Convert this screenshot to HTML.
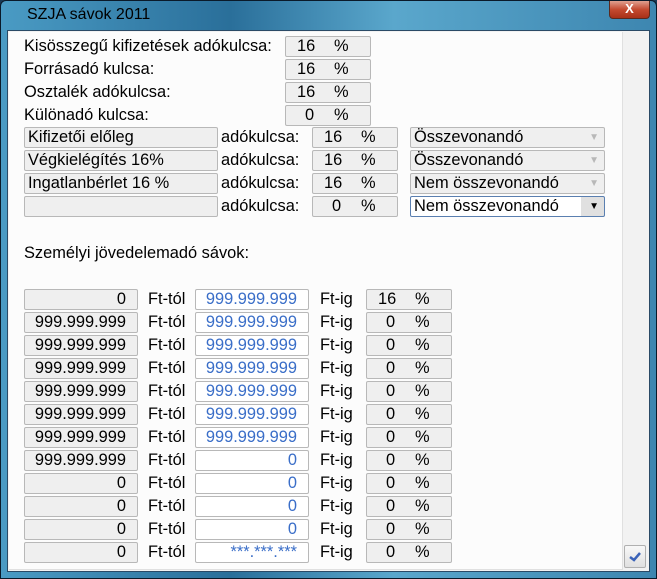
<!DOCTYPE html>
<html><head><meta charset="utf-8"><style>
*{box-sizing:border-box;margin:0;padding:0}
body{width:657px;height:579px;overflow:hidden;font-family:"Liberation Sans",Arial,sans-serif;font-size:16.4px;color:#000;background:#1a3a55}
.win{position:absolute;left:0;top:0;width:657px;height:579px;border:1px solid #0a1a2a;background:linear-gradient(90deg,#4a9bc4 0%,#2a6f9a 35%,#5aa7cc 60%,#3d86b0 100%);border-radius:6px 6px 0 0}
.title{position:absolute;left:26px;top:5px;font-size:16px;color:#000}
.close{position:absolute;left:608px;top:0;width:41px;height:18px;border:1px solid #5a2a20;border-top:none;border-radius:0 0 4px 4px;background:linear-gradient(#e0a090,#c44a30 50%,#a83018);color:#fff;font-weight:bold;text-align:center;font-size:13px;line-height:16px}
.client{position:absolute;left:7px;top:30px;width:643px;height:542px;background:#f2f2f2;border:1px solid #2a4a66}
.panel{position:absolute;left:1px;top:1px;width:614px;height:538px;background:#fcfcfc;border-right:1px solid #e0e0e0;border-bottom:1px solid #e0e0e0}
.a{position:absolute;white-space:nowrap}
.b{position:absolute;height:21px;border:1px solid #b8b8b8;border-radius:2px;background:#efefef;line-height:19px;white-space:nowrap}
.w{background:#fff;color:#3a6ec8}
.chk{position:absolute;left:624px;top:545px;width:22px;height:23px;border:1px solid #b0b0b0;border-radius:2px;background:linear-gradient(#f8f8f8,#e0e0e0)}
</style></head><body>
<div class="win">
<div class="title">SZJA sávok 2011</div>
<div class="close">X</div>
</div>
<div class="client"><div class="panel"></div></div>
<div class="chk"><svg width="20" height="21" viewBox="0 0 20 21"><path d="M5 11 L9 14 L15 7" stroke="#3a62b8" stroke-width="2.5" fill="none"/></svg></div>

<div class="a" style="left:24px;top:37px">Kisösszegű kifizetések adókulcsa:</div>
<div class="a" style="left:24px;top:60px">Forrásadó kulcsa:</div>
<div class="a" style="left:24px;top:83px">Osztalék adókulcsa:</div>
<div class="a" style="left:24px;top:106px">Különadó kulcsa:</div>
<div class="b" style="left:285px;top:36px;width:86px"><span class="a" style="left:11px">16</span><span class="a" style="left:48px">%</span></div>
<div class="b" style="left:285px;top:59px;width:86px"><span class="a" style="left:11px">16</span><span class="a" style="left:48px">%</span></div>
<div class="b" style="left:285px;top:82px;width:86px"><span class="a" style="left:11px">16</span><span class="a" style="left:48px">%</span></div>
<div class="b" style="left:285px;top:105px;width:86px"><span class="a" style="left:19px">0</span><span class="a" style="left:48px">%</span></div>

<div class="b" style="left:24px;top:127px;width:194px;padding-left:3px">Kifizetői előleg</div>
<div class="b" style="left:24px;top:150px;width:194px;padding-left:3px">Végkielégítés 16%</div>
<div class="b" style="left:24px;top:173px;width:194px;padding-left:3px">Ingatlanbérlet 16 %</div>
<div class="b" style="left:24px;top:196px;width:194px"></div>
<div class="a" style="left:221px;top:128px">adókulcsa:</div>
<div class="a" style="left:221px;top:151px">adókulcsa:</div>
<div class="a" style="left:221px;top:174px">adókulcsa:</div>
<div class="a" style="left:221px;top:197px">adókulcsa:</div>
<div class="b" style="left:312px;top:127px;width:86px"><span class="a" style="left:11px">16</span><span class="a" style="left:48px">%</span></div>
<div class="b" style="left:312px;top:150px;width:86px"><span class="a" style="left:11px">16</span><span class="a" style="left:48px">%</span></div>
<div class="b" style="left:312px;top:173px;width:86px"><span class="a" style="left:11px">16</span><span class="a" style="left:48px">%</span></div>
<div class="b" style="left:312px;top:196px;width:86px"><span class="a" style="left:19px">0</span><span class="a" style="left:48px">%</span></div>
<div class="b" style="left:410px;top:127px;width:195px;padding-left:3px">Összevonandó<span class="a" style="right:5px;top:0;color:#b8b8b8;font-size:10px">▼</span></div>
<div class="b" style="left:410px;top:150px;width:195px;padding-left:3px">Összevonandó<span class="a" style="right:5px;top:0;color:#b8b8b8;font-size:10px">▼</span></div>
<div class="b" style="left:410px;top:173px;width:195px;padding-left:3px">Nem összevonandó<span class="a" style="right:5px;top:0;color:#b8b8b8;font-size:10px">▼</span></div>
<div class="b" style="left:410px;top:196px;width:195px;padding-left:3px;background:linear-gradient(90deg,#fff 88%,#e0e0e0 88%);border-color:#5a7fb0">Nem összevonandó<span class="a" style="right:5px;top:0;color:#000;font-size:10px">▼</span></div>

<div class="a" style="left:24px;top:244px">Személyi jövedelemadó sávok:</div>

<div id="rows"></div>
<script>
var d=[["0","999.999.999","16"],["999.999.999","999.999.999","0"],["999.999.999","999.999.999","0"],["999.999.999","999.999.999","0"],["999.999.999","999.999.999","0"],["999.999.999","999.999.999","0"],["999.999.999","999.999.999","0"],["999.999.999","0","0"],["0","0","0"],["0","0","0"],["0","0","0"],["0","***.***.***","0"]];
var h="";
d.forEach(function(r,i){var y=289+i*23;
h+='<div class="b" style="left:24px;top:'+y+'px;width:114px;text-align:right;padding-right:11px">'+r[0]+'</div>';
h+='<div class="a" style="left:148px;top:'+(y+1)+'px">Ft-tól</div>';
h+='<div class="b w" style="left:195px;top:'+y+'px;width:114px;text-align:right;padding-right:11px">'+r[1]+'</div>';
h+='<div class="a" style="left:320px;top:'+(y+1)+'px">Ft-ig</div>';
h+='<div class="b" style="left:366px;top:'+y+'px;width:86px"><span class="a" style="left:'+(r[2].length>1?11:19)+'px">'+r[2]+'</span><span class="a" style="left:48px">%</span></div>';});
document.getElementById("rows").innerHTML=h;
</script>
</body></html>
